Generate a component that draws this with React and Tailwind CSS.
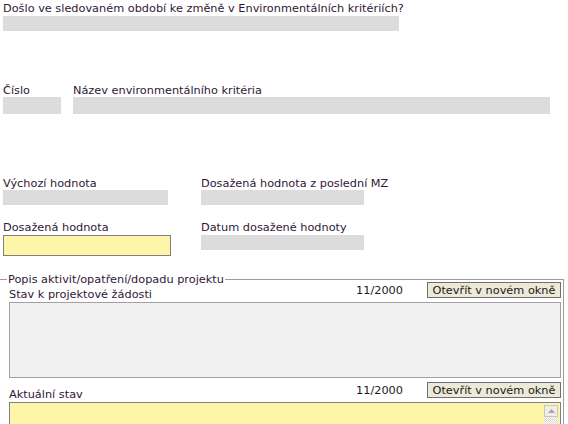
import React from "react";

const font = { fontFamily: "'DejaVu Sans', Verdana, sans-serif" };

function Label({ children, className = "" }) {
  return <div className={"leading-[13px] whitespace-nowrap " + className}>{children}</div>;
}

function OpenButton() {
  return (
    <button
      type="button"
      className="w-[134px] h-[16px] flex items-center justify-center border border-[#707070] bg-[#ece9d8] text-[#1a1a1a] leading-[13px] whitespace-nowrap"
    >
      Otevřít v novém okně
    </button>
  );
}

function FieldHeader({ label, top }) {
  return (
    <div className={"flex items-end justify-between " + top}>
      <Label className="mb-[1px]">{label}</Label>
      <div className="flex items-center gap-[24px] mb-[4px]">
        <span className="leading-[13px] text-[#1a1a1a]">11/2000</span>
        <OpenButton />
      </div>
    </div>
  );
}

export default function App() {
  return (
    <div
      className="w-[568px] h-[424px] overflow-hidden bg-white text-[11.3px] text-[#2f1836]"
      style={font}
    >
      <div className="pl-[3px]">
        <Label className="pt-[2px]">
          Došlo ve sledovaném období ke změně v Environmentálních kritériích?
        </Label>
        <div className="mt-[1px] h-[15px] w-[396px] bg-[#dcdcdc]" />

        <div className="mt-[53px] flex gap-[12px]">
          <div className="w-[58px]">
            <Label>Číslo</Label>
            <div className="h-[17px] bg-[#dcdcdc]" />
          </div>
          <div className="w-[477px]">
            <Label>Název environmentálního kritéria</Label>
            <div className="h-[17px] bg-[#dcdcdc]" />
          </div>
        </div>

        <div className="mt-[63px] flex">
          <div className="w-[198px]">
            <Label>Výchozí hodnota</Label>
            <div className="h-[15px] w-[165px] bg-[#dcdcdc]" />
          </div>
          <div>
            <Label>Dosažená hodnota z poslední MZ</Label>
            <div className="h-[15px] w-[163px] bg-[#dcdcdc]" />
          </div>
        </div>

        <div className="mt-[16px] flex">
          <div className="w-[198px]">
            <Label>Dosažená hodnota</Label>
            <div className="mt-[1px] h-[21px] w-[168px] border border-[#808080] bg-[#fdf5aa]" />
          </div>
          <div>
            <Label>Datum dosažené hodnoty</Label>
            <div className="mt-[1px] h-[15px] w-[163px] bg-[#dcdcdc]" />
          </div>
        </div>
      </div>

      <div className="mt-[17px] w-[564px]">
        <div className="flex items-start h-[13px]">
          <div className="mt-[6px] w-[7px] h-px bg-[#9c9c9c]" />
          <div className="px-[1px] leading-[13px] whitespace-nowrap">
            Popis aktivit/opatření/dopadu projektu
          </div>
          <div className="mt-[6px] flex-1 h-px bg-[#9c9c9c]" />
        </div>
        <div className="-mt-[7px] border-r border-[#9c9c9c] pl-[9px] pr-[2px] pb-[40px]">
          <FieldHeader label="Stav k projektové žádosti" top="pt-[3px]" />
          <div className="h-[76px] border border-[#a0a0a0] bg-[#f1f1f1]" />
          <FieldHeader label="Aktuální stav" top="pt-[4px]" />
          <div className="h-[60px] border border-[#808080] bg-[#fdf5aa] flex justify-end">
            <div className="mt-[2px] mr-[2px] w-[14px] flex flex-col">
              <div className="h-[12px] border border-[#c8c6bc] bg-[#efeee8] flex items-center justify-center">
                <svg width="7" height="4" viewBox="0 0 7 4">
                  <path d="M0 4 L3.5 0 L7 4 Z" fill="#a8a8a0" />
                </svg>
              </div>
              <div className="flex-1 bg-[repeating-conic-gradient(#d8d5cc_0%_25%,#ffffff_0%_50%)] bg-[length:2px_2px]" />
            </div>
          </div>
        </div>
      </div>
    </div>
  );
}
